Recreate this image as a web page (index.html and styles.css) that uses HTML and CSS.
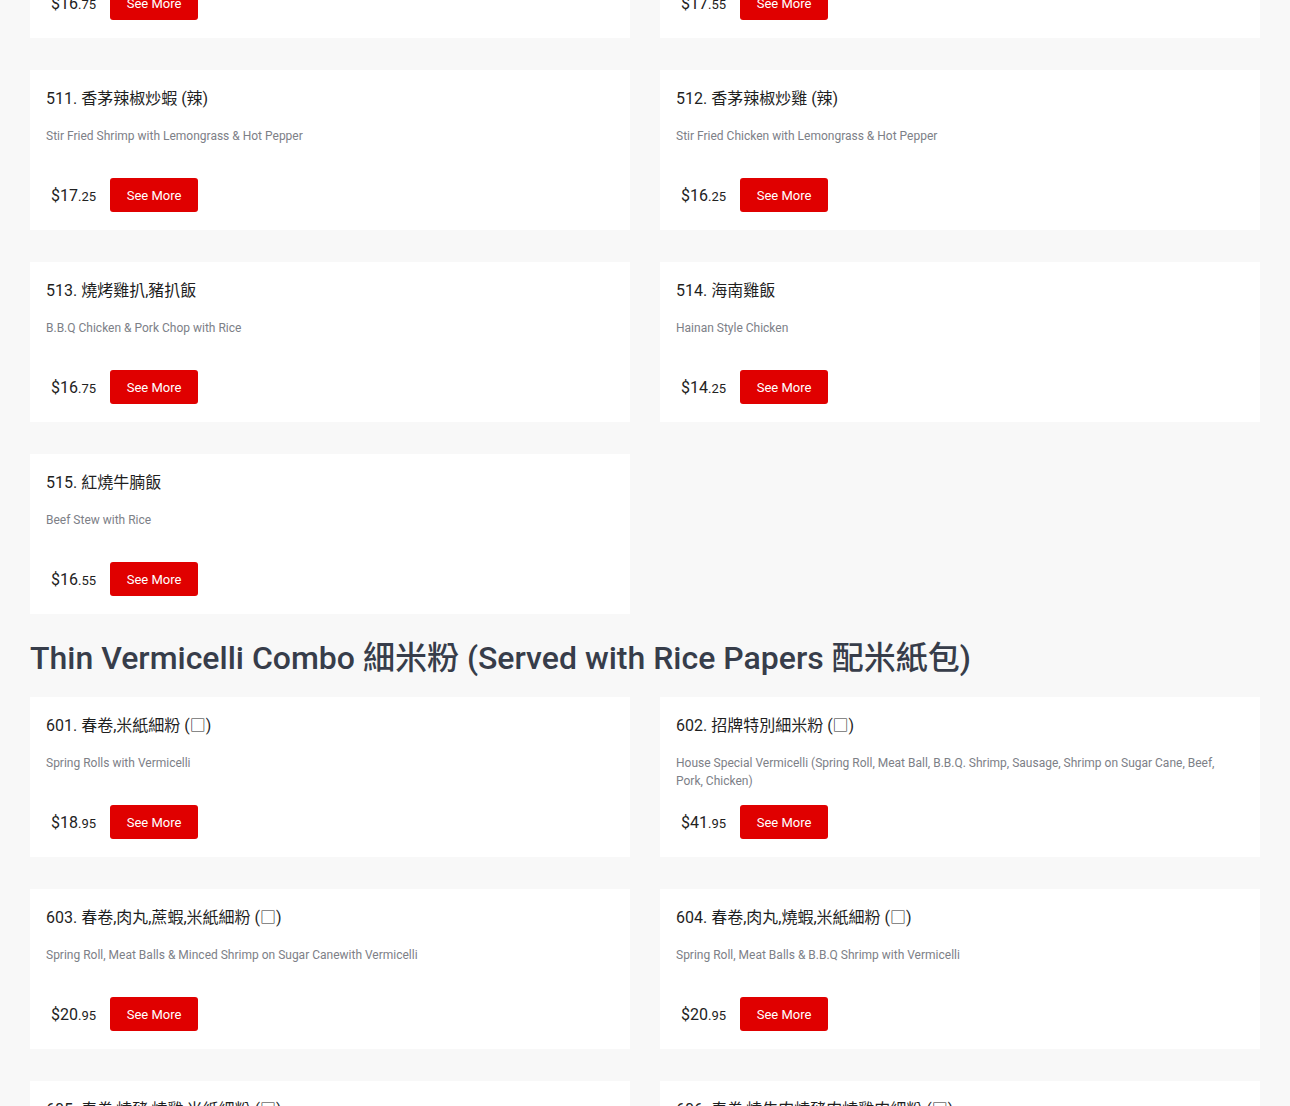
FILE: index.html
```html
<!DOCTYPE html>
<html lang="en">
<head>
<meta charset="utf-8">
<title>Menu</title>
<link rel="stylesheet" href="styles.css">
</head>
<body>
<main class="menu">
  <section class="grid grid-first">
    <article class="card">
      <h3 class="card-title">509. 香茅辣椒炒牛 (辣)</h3>
      <p class="card-desc">Stir Fried Beef with Lemongrass &amp; Hot Pepper</p>
      <div class="card-foot"><span class="price">$16<small>.75</small></span><button class="btn">See More</button></div>
    </article>
    <article class="card">
      <h3 class="card-title">510. 香茅辣椒炒魷 (辣)</h3>
      <p class="card-desc">Stir Fried Squid with Lemongrass &amp; Hot Pepper</p>
      <div class="card-foot"><span class="price">$17<small>.55</small></span><button class="btn">See More</button></div>
    </article>
    <article class="card">
      <h3 class="card-title">511. 香茅辣椒炒蝦 (辣)</h3>
      <p class="card-desc">Stir Fried Shrimp with Lemongrass &amp; Hot Pepper</p>
      <div class="card-foot"><span class="price">$17<small>.25</small></span><button class="btn">See More</button></div>
    </article>
    <article class="card">
      <h3 class="card-title">512. 香茅辣椒炒雞 (辣)</h3>
      <p class="card-desc">Stir Fried Chicken with Lemongrass &amp; Hot Pepper</p>
      <div class="card-foot"><span class="price">$16<small>.25</small></span><button class="btn">See More</button></div>
    </article>
    <article class="card">
      <h3 class="card-title">513. 燒烤雞扒,豬扒飯</h3>
      <p class="card-desc">B.B.Q Chicken &amp; Pork Chop with Rice</p>
      <div class="card-foot"><span class="price">$16<small>.75</small></span><button class="btn">See More</button></div>
    </article>
    <article class="card">
      <h3 class="card-title">514. 海南雞飯</h3>
      <p class="card-desc">Hainan Style Chicken</p>
      <div class="card-foot"><span class="price">$14<small>.25</small></span><button class="btn">See More</button></div>
    </article>
    <article class="card">
      <h3 class="card-title">515. 紅燒牛腩飯</h3>
      <p class="card-desc">Beef Stew with Rice</p>
      <div class="card-foot"><span class="price">$16<small>.55</small></span><button class="btn">See More</button></div>
    </article>
  </section>

  <h2 class="section-title">Thin Vermicelli Combo 細米粉 (Served with Rice Papers 配米紙包)</h2>

  <section class="grid">
    <article class="card">
      <h3 class="card-title">601. 春卷,米紙細粉 (□)</h3>
      <p class="card-desc">Spring Rolls with Vermicelli</p>
      <div class="card-foot"><span class="price">$18<small>.95</small></span><button class="btn">See More</button></div>
    </article>
    <article class="card">
      <h3 class="card-title">602. 招牌特別細米粉 (□)</h3>
      <p class="card-desc">House Special Vermicelli (Spring Roll, Meat Ball, B.B.Q. Shrimp, Sausage, Shrimp on Sugar Cane, Beef, Pork, Chicken)</p>
      <div class="card-foot"><span class="price">$41<small>.95</small></span><button class="btn">See More</button></div>
    </article>
    <article class="card">
      <h3 class="card-title">603. 春卷,肉丸,蔗蝦,米紙細粉 (□)</h3>
      <p class="card-desc">Spring Roll, Meat Balls &amp; Minced Shrimp on Sugar Canewith Vermicelli</p>
      <div class="card-foot"><span class="price">$20<small>.95</small></span><button class="btn">See More</button></div>
    </article>
    <article class="card">
      <h3 class="card-title">604. 春卷,肉丸,燒蝦,米紙細粉 (□)</h3>
      <p class="card-desc">Spring Roll, Meat Balls &amp; B.B.Q Shrimp with Vermicelli</p>
      <div class="card-foot"><span class="price">$20<small>.95</small></span><button class="btn">See More</button></div>
    </article>
    <article class="card">
      <h3 class="card-title">605. 春卷,燒豬,燒雞,米紙細粉 (□)</h3>
      <p class="card-desc">Spring Roll, B.B.Q Pork &amp; B.B.Q Chicken with Vermicelli</p>
      <div class="card-foot"><span class="price">$20<small>.95</small></span><button class="btn">See More</button></div>
    </article>
    <article class="card">
      <h3 class="card-title">606. 春卷,燒牛肉燒豬肉燒雞肉細粉 (□)</h3>
      <p class="card-desc">Spring Roll, Grilled Beef, Pork &amp; Chicken with Vermicelli</p>
      <div class="card-foot"><span class="price">$21<small>.95</small></span><button class="btn">See More</button></div>
    </article>
  </section>
</main>
</body>
</html>
```

FILE: styles.css
```css
* { box-sizing: border-box; }

html, body {
  margin: 0;
  padding: 0;
  background: #f8f8f8;
  font-family: Roboto, "Noto Sans CJK TC", sans-serif;
  color: #222;
}

.menu {
  padding: 0 30px;
  margin-top: -122px;
}

.grid {
  display: grid;
  grid-template-columns: 600px 600px;
  column-gap: 30px;
  row-gap: 32px;
}

.card {
  background: #fff;
  height: 160px;
  padding: 17px 16px 17px 16px;
  display: flex;
  flex-direction: column;
}

.card-title {
  margin: 0;
  font-size: 16px;
  line-height: 24px;
  font-weight: 400;
  color: #1f1f1f;
  white-space: nowrap;
}

.card-desc {
  margin: 16px 0 0 0;
  font-size: 12px;
  line-height: 18px;
  height: 36px;
  color: #7d8087;
}

.card-foot {
  margin-top: 15px;
  display: flex;
  align-items: center;
  height: 34px;
}

.price {
  font-size: 16px;
  color: #222;
  padding: 0 14px 0 5px;
}

.price small {
  font-size: 13px;
}

.btn {
  width: 88px;
  height: 34px;
  border: none;
  border-radius: 3px;
  background: #e00000;
  color: #fff;
  font-family: Roboto, sans-serif;
  font-size: 13px;
  padding: 0;
  cursor: pointer;
}

.section-title {
  margin: 24px 0 19px 0;
  font-size: 32px;
  line-height: 40px;
  font-weight: 500;
  color: #373d4a;
  white-space: nowrap;
}
```
